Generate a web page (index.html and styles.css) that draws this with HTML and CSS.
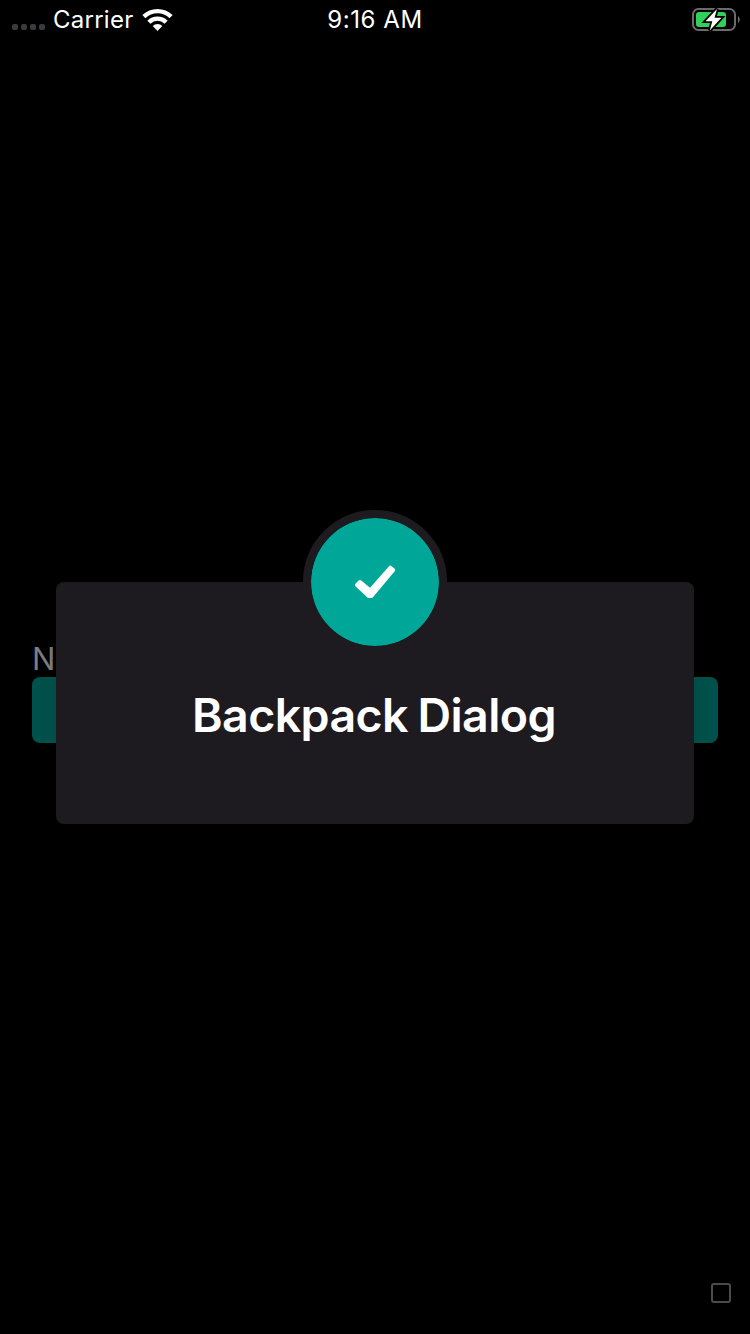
FILE: index.html
```html
<!DOCTYPE html>
<html lang="en">
<head>
<meta charset="utf-8">
<title>Backpack Dialog</title>
<link rel="stylesheet" href="styles.css">
</head>
<body>
<div class="screen">
  <header class="status">
    <div class="status-left">
      <div class="signal"><i></i><i></i><i></i><i></i></div>
      <span class="carrier">Carrier</span>
      <svg class="wifi" width="32" height="24" viewBox="0 0 32 24">
        <g fill="none" stroke="#fff" stroke-width="4.400">
          <path d="M1.900 8.600a19.600 19.600 0 0 1 27.200 0"/>
          <path d="M6.900 14.200a12.200 12.200 0 0 1 17.200 0"/>
        </g>
        <path d="M10.700 18a6.800 6.800 0 0 1 9.600 0L15.500 23Z" fill="#fff"/>
      </svg>
    </div>
    <span class="time">9:16 AM</span>
    <svg class="battery" width="50" height="30" viewBox="0 0 50 30">
      <rect x="3" y="5" width="42" height="21" rx="5.5" fill="none" stroke="#6b6b6e" stroke-width="2"/>
      <path d="M48 12.200v6.600c1.300-.7 1.700-1.900 1.700-3.300s-.4-2.600-1.700-3.300z" fill="#6b6b6e"/>
      <rect x="6" y="8" width="30" height="15" rx="3" fill="#30d158"/>
      <path d="M27 5L15.500 17.300h6.800L19.800 26.500L31.400 13.700h-6.900z" fill="#fff" stroke="#000" stroke-width="3.600" paint-order="stroke"/>
    </svg>
  </header>
  <main class="content">
    <div class="label">N</div>
    <div class="button"></div>
  </main>
  <footer class="footer"><div class="square"></div></footer>
  <div class="overlay">
    <section class="dialog">
      <div class="badge">
        <svg width="128" height="128" viewBox="0 0 128 128">
          <path d="M49 64L46 67L57.800 78.100H60.200L82.200 52L79.300 49.700L59.200 72.600Z" fill="#fff" stroke="#fff" stroke-width="4" stroke-linejoin="round"/>
        </svg>
      </div>
      <h1 class="title">Backpack Dialog</h1>
    </section>
  </div>
</div>
</body>
</html>
```
FILE: styles.css
```css
body {
  margin: 0;
  background: #000;
  font-family: Inter, sans-serif;
}
.screen {
  position: relative;
  display: flex;
  flex-direction: column;
  width: 750px;
  height: 1334px;
  overflow: hidden;
  background: #000;
  color: #fff;
}
.status {
  display: grid;
  grid-template-columns: 1fr auto 1fr;
  align-items: center;
  height: 40px;
  padding: 0 10px 0 12px;
  font-size: 24px;
  line-height: 40px;
}
.status-left {
  display: flex;
  align-items: center;
}
.signal {
  display: flex;
  gap: 3px;
  padding-top: 14px;
  margin-right: 8px;
}
.signal i {
  width: 6px;
  height: 6px;
  border-radius: 2px;
  background: #3b3b3d;
}
.carrier {
  width: 80px;
  letter-spacing: 0.25px;
  white-space: nowrap;
}
.wifi {
  margin-left: 9px;
}
.time {
  margin-right: 2px;
  letter-spacing: 0.6px;
  white-space: nowrap;
}
.battery {
  justify-self: end;
  margin-bottom: 2px;
}
.content {
  flex: 1;
  padding: 600px 32px 0;
}
.label {
  height: 37px;
  color: #7f7f83;
  font-size: 31px;
  font-weight: 400;
  line-height: 37px;
}
.button {
  height: 66px;
  border-radius: 8px;
  background: #00524c;
}
.footer {
  display: flex;
  justify-content: flex-end;
  padding: 0 19px 31px;
}
.square {
  box-sizing: border-box;
  width: 20px;
  height: 20px;
  border: 2px solid #4b4b4b;
  border-radius: 3px;
}
.overlay {
  position: absolute;
  inset: 0;
  display: flex;
  flex-direction: column;
  padding: 582px 56px 0;
}
.dialog {
  display: flex;
  flex-direction: column;
  align-items: center;
  height: 242px;
  border-radius: 8px;
  background: #1d1b20;
  box-shadow: 0 4px 30px rgba(2, 2, 5, 0.1);
}
.badge {
  flex: none;
  width: 128px;
  height: 128px;
  margin-top: -72px;
  border: 8px solid #1d1b20;
  border-radius: 50%;
  background: #00a698;
  background-clip: padding-box;
}
.badge svg {
  display: block;
}
.title {
  margin: 31px 2px 0 0;
  font-size: 46.500px;
  font-weight: 600;
  line-height: 60px;
  letter-spacing: -0.6px;
  word-spacing: -1.5px;
  white-space: nowrap;
}
```
